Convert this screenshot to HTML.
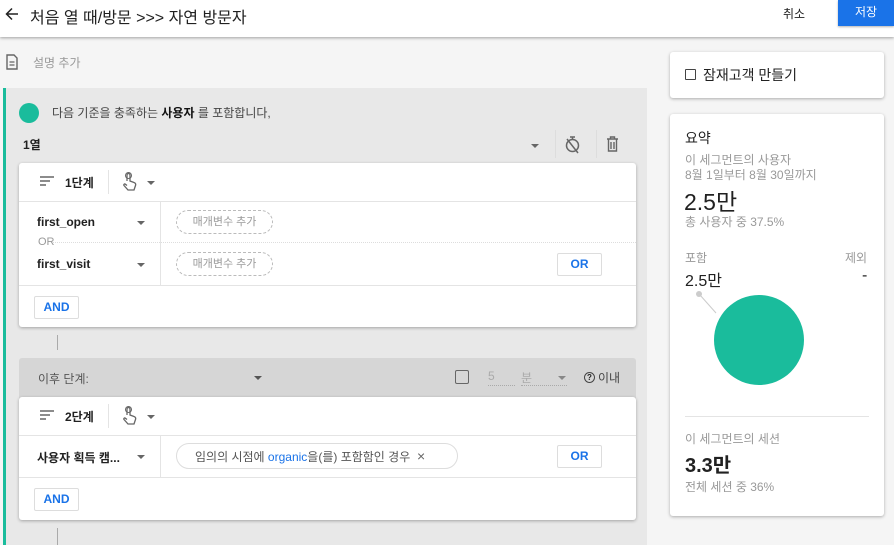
<!DOCTYPE html><html><head><meta charset="utf-8"><style>
*{box-sizing:border-box;margin:0;padding:0}
body{width:894px;height:545px;overflow:hidden;background:#f5f5f5;font-family:"Liberation Sans","Noto Sans CJK KR",sans-serif;position:relative;color:#212121}
.a{position:absolute;white-space:nowrap}
.card{position:absolute;background:#fff;border-radius:3px;box-shadow:0 1px 3px rgba(0,0,0,.3)}
.btn{position:absolute;border:1px solid #ddd;background:#fff;color:#1a73e8;font-size:12px;font-weight:bold;text-align:center;border-radius:2px}
.pill{position:absolute;border:1px dashed #bbb;border-radius:13px;font-size:11px;color:#999;text-align:center}
.hl{position:absolute;background:#e4e4e4;height:1px}
.vl{position:absolute;background:#e4e4e4;width:1px}
.tri{position:absolute;width:0;height:0;border-left:4px solid transparent;border-right:4px solid transparent;border-top:4px solid #666}
</style></head><body>
<div class="a" style="left:0;top:0;width:894px;height:37px;background:#fff;box-shadow:0 1px 3px rgba(0,0,0,.35)"></div>
<svg class="a" style="left:5px;top:7px" width="14" height="14" viewBox="0 0 14 14"><path d="M13 7H2M7 1.5L1.5 7 7 12.5" fill="none" stroke="#222" stroke-width="1.5"/></svg>
<div class="a" style="left:30px;top:4px;font-size:16px">처음 열 때/방문 &gt;&gt;&gt; 자연 방문자</div>
<div class="a" style="left:783px;top:5px;font-size:12px">취소</div>
<div class="a" style="left:838px;top:0;width:56px;height:26px;background:#1a73e8;color:#fff;font-size:12px;text-align:center;line-height:24px;box-shadow:0 1px 2px rgba(0,0,0,.3)">저장</div>

<svg class="a" style="left:5px;top:54px" width="14" height="16" viewBox="0 0 14 16"><path d="M2 1h7l3 3v11H2z" fill="none" stroke="#666" stroke-width="1.4"/><path d="M4.5 8h5M4.5 11h5" stroke="#666" stroke-width="1.2"/></svg>
<div class="a" style="left:33px;top:54px;font-size:12px;color:#999">설명 추가</div>

<div class="a" style="left:3px;top:88px;width:644px;height:457px;background:#e8e8e8;border-left:3px solid #1abc9c"></div>
<div class="a" style="left:19px;top:103px;width:20px;height:20px;border-radius:50%;background:#1abc9c"></div>
<div class="a" style="left:52px;top:104px;font-size:12px;color:#444">다음 기준을 충족하는 <b style="color:#111">사용자</b> 를 포함합니다,</div>
<div class="a" style="left:23px;top:136px;font-size:12px;font-weight:bold">1열</div>
<div class="tri" style="left:531px;top:144px"></div>
<div class="vl" style="left:555px;top:130px;height:28px;background:#ddd"></div>
<svg class="a" style="left:564px;top:135px" width="17" height="19" viewBox="0 0 17 19"><circle cx="8.5" cy="10.5" r="6" fill="none" stroke="#666" stroke-width="1.5"/><path d="M6 2h5M8.5 2v2M3 4l11 14" stroke="#666" stroke-width="1.5"/></svg>
<div class="vl" style="left:596px;top:130px;height:28px;background:#ddd"></div>
<svg class="a" style="left:606px;top:136px" width="13" height="16" viewBox="0 0 13 16"><path d="M1 3h11M4.5 3V1h4v2M2.5 3v12h8V3M5 6v7M8 6v7" fill="none" stroke="#666" stroke-width="1.4"/></svg>

<div class="card" style="left:19px;top:163px;width:617px;height:164px"></div>
<svg class="a" style="left:40px;top:176px" width="14" height="11"><path d="M0 1h14M0 5h10M0 9h6" stroke="#666" stroke-width="1.4"/></svg>
<div class="a" style="left:65px;top:174px;font-size:12px;font-weight:bold">1단계</div>
<div class="vl" style="left:108px;top:170px;height:24px"></div>
<svg class="a" style="left:122px;top:172px" width="16" height="19" viewBox="0 0 16 19"><path d="M5 9V3a1.5 1.5 0 013 0v6l4 1.5c1.5.5 2 1.5 1.5 3L12 18H6L2 13.5c-.6-.8.4-2 1.3-1.3L5 13.5" fill="none" stroke="#666" stroke-width="1.3"/><circle cx="6.5" cy="3.5" r="3" fill="none" stroke="#666" stroke-width="1"/></svg>
<div class="tri" style="left:147px;top:181px"></div>
<div class="hl" style="left:19px;top:201px;width:617px"></div>
<div class="vl" style="left:160px;top:201px;height:84px"></div>
<div class="a" style="left:37px;top:215px;font-size:12px;font-weight:bold">first_open</div>
<div class="tri" style="left:137px;top:221px"></div>
<div class="a" style="left:38px;top:236px;font-size:11px;color:#999">OR</div>
<div class="a" style="left:52px;top:242px;width:584px;border-top:1px dotted #ddd"></div>
<div class="a" style="left:37px;top:257px;font-size:12px;font-weight:bold">first_visit</div>
<div class="tri" style="left:137px;top:263px"></div>
<div class="pill" style="left:176px;top:210px;width:97px;height:24px;line-height:22px">매개변수 추가</div>
<div class="pill" style="left:176px;top:252px;width:97px;height:24px;line-height:22px">매개변수 추가</div>
<div class="btn" style="left:557px;top:253px;width:45px;height:23px;line-height:21px">OR</div>
<div class="hl" style="left:19px;top:285px;width:617px"></div>
<div class="btn" style="left:34px;top:296px;width:45px;height:23px;line-height:21px">AND</div>
<div class="vl" style="left:57px;top:335px;height:15px;background:#aaa"></div>

<div class="a" style="left:19px;top:358px;width:617px;height:44px;background:#d6d6d6;border-radius:3px 3px 0 0"></div>
<div class="a" style="left:38px;top:370px;font-size:12px;color:#555">이후 단계:</div>
<div class="tri" style="left:254px;top:376px;border-top-color:#555"></div>
<div class="a" style="left:455px;top:370px;width:14px;height:14px;border:1.5px solid #666;border-radius:2px"></div>
<div class="a" style="left:488px;top:369px;font-size:12px;color:#aaa;width:27px;border-bottom:1px dotted #aaa;height:17px">5</div>
<div class="a" style="left:521px;top:369px;font-size:12px;color:#aaa;width:46px;border-bottom:1px dotted #aaa;height:17px">분</div>
<div class="tri" style="left:558px;top:376px;border-top-color:#888"></div>
<div class="a" style="left:584px;top:372px;width:11px;height:11px;border:1.3px solid #444;border-radius:50%;font-size:8px;text-align:center;line-height:9px;font-weight:bold">?</div>
<div class="a" style="left:598px;top:369px;font-size:12px;color:#444">이내</div>

<div class="card" style="left:19px;top:397px;width:617px;height:123px"></div>
<svg class="a" style="left:40px;top:410px" width="14" height="11"><path d="M0 1h14M0 5h10M0 9h6" stroke="#666" stroke-width="1.4"/></svg>
<div class="a" style="left:65px;top:408px;font-size:12px;font-weight:bold">2단계</div>
<div class="vl" style="left:108px;top:404px;height:24px"></div>
<svg class="a" style="left:122px;top:406px" width="16" height="19" viewBox="0 0 16 19"><path d="M5 9V3a1.5 1.5 0 013 0v6l4 1.5c1.5.5 2 1.5 1.5 3L12 18H6L2 13.5c-.6-.8.4-2 1.3-1.3L5 13.5" fill="none" stroke="#666" stroke-width="1.3"/><circle cx="6.5" cy="3.5" r="3" fill="none" stroke="#666" stroke-width="1"/></svg>
<div class="tri" style="left:147px;top:415px"></div>
<div class="hl" style="left:19px;top:435px;width:617px"></div>
<div class="vl" style="left:160px;top:435px;height:42px"></div>
<div class="a" style="left:37px;top:449px;font-size:12px;font-weight:bold">사용자 획득 캠...</div>
<div class="tri" style="left:137px;top:455px"></div>
<div class="a" style="left:176px;top:443px;width:282px;height:26px;border:1px solid #ddd;border-radius:13px;font-size:12px;color:#555;padding-left:18px;line-height:24px">임의의 시점에 <span style="color:#1a73e8">organic</span>을(를) 포함함인 경우 &nbsp;<span style="color:#666;font-size:14px">×</span></div>
<div class="btn" style="left:557px;top:445px;width:45px;height:23px;line-height:21px">OR</div>
<div class="hl" style="left:19px;top:477px;width:617px"></div>
<div class="btn" style="left:34px;top:488px;width:45px;height:23px;line-height:21px">AND</div>
<div class="vl" style="left:57px;top:528px;height:17px;background:#aaa"></div>

<div class="card" style="left:670px;top:52px;width:214px;height:46px"></div>
<div class="a" style="left:685px;top:69px;width:11px;height:11px;border:1.3px solid #444;border-radius:1px"></div>
<div class="a" style="left:703px;top:65px;font-size:14px">잠재고객 만들기</div>

<div class="card" style="left:670px;top:114px;width:214px;height:402px"></div>
<div class="a" style="left:685px;top:128px;font-size:14px">요약</div>
<div class="a" style="left:685px;top:151px;font-size:12px;color:#999">이 세그먼트의 사용자</div>
<div class="a" style="left:685px;top:166px;font-size:12px;color:#999">8월 1일부터 8월 30일까지</div>
<div class="a" style="left:684px;top:183px;font-size:23px">2.5만</div>
<div class="a" style="left:685px;top:213px;font-size:12px;color:#999">총 사용자 중 37.5%</div>
<div class="a" style="left:685px;top:249px;font-size:12px;color:#999">포함</div>
<div class="a" style="left:845px;top:249px;font-size:12px;color:#999">제외</div>
<div class="a" style="left:685px;top:267px;font-size:16px">2.5만</div>
<div class="a" style="left:862px;top:267px;font-size:16px">-</div>
<svg class="a" style="left:690px;top:285px" width="130" height="110"><circle cx="69" cy="55" r="45" fill="#1abc9c"/><line x1="10" y1="10" x2="26" y2="28" stroke="#ccc" stroke-width="1"/><circle cx="9" cy="9" r="3" fill="#ccc"/></svg>
<div class="hl" style="left:685px;top:416px;width:184px"></div>
<div class="a" style="left:685px;top:430px;font-size:12px;color:#999">이 세그먼트의 세션</div>
<div class="a" style="left:685px;top:449px;font-size:20px;font-weight:bold">3.3만</div>
<div class="a" style="left:685px;top:478px;font-size:12px;color:#999">전체 세션 중 36%</div>
</body></html>
